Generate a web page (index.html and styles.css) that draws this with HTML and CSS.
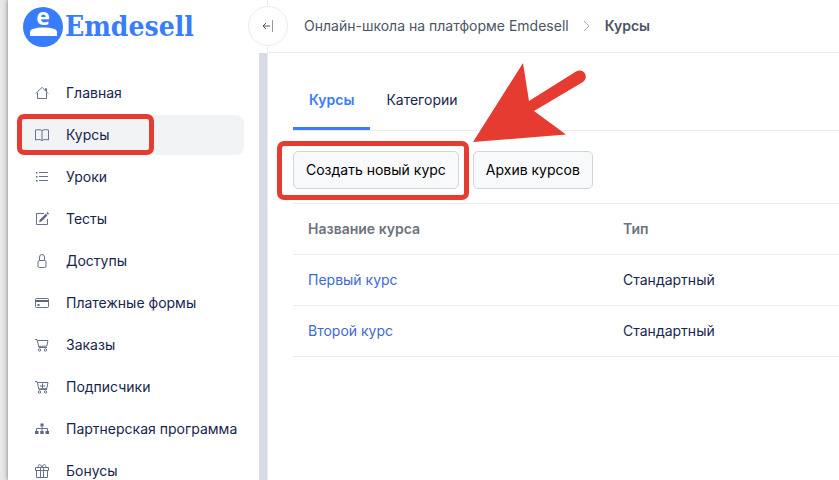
FILE: index.html
```html
<!DOCTYPE html>
<html lang="ru">
<head>
<meta charset="utf-8">
<title>Курсы</title>
<link rel="stylesheet" href="styles.css">
</head>
<body>
<div class="app">
  <aside class="sidebar">
    <a class="brand" href="#">
      <svg class="brand-mark" viewBox="0 0 40 40" aria-hidden="true">
        <circle cx="20" cy="20" r="20"/>
        <path class="light" d="M7 29v-4c0-3 5-4.500 13.500-4.500S34 22 34 25v4z"/>
        <text x="20" y="18" text-anchor="middle">e</text>
      </svg>
      <span>Emdesell</span>
    </a>
    <button class="collapse" type="button" aria-label="Свернуть меню">
      <svg viewBox="0 0 12 14"><path d="M8 7H1M4 4L1 7l3 3"/><path class="bar" d="M10.500 1v12"/></svg>
    </button>
    <div class="side-body">
      <nav class="menu">
        <a href="#"><svg viewBox="0 0 14 14"><path d="M.8 7.500L7 1.300l6.200 6.200M2.500 6.500v6h9v-6M10.500 4.500v-2h1v3"/></svg>Главная</a>
        <a class="active" href="#"><svg viewBox="0 0 14 14"><path d="M7 2.500C5.500 1.500 2.500 1.500.5 2v10c2-.7 5-.7 6.500.5 1.500-1.200 4.500-1.200 6.500-.5V2c-2-.5-5-.5-6.500.5zM7 2.500v10"/></svg>Курсы<span class="mark mark-menu"></span></a>
        <a href="#"><svg viewBox="0 0 14 14"><path d="M4 2.500h9M4 6.500h9M4 10.500h9"/><path class="fill" d="M1 2h1.500v1.500H1zM1 6h1.500v1.500H1zM1 10h1.500v1.500H1z"/></svg>Уроки</a>
        <a href="#"><svg viewBox="0 0 14 14"><path d="M9 1.500H1.500v11h11V7"/><path class="fill" d="M10.800 1.800l1.600 1.600-6 6-2.400.8.800-2.400zM11.400 1.200L12.600 0 14 1.500l-1.100 1.300z"/></svg>Тесты</a>
        <a href="#"><svg viewBox="0 0 14 14"><rect x="3" y="6.500" width="8" height="7" rx="1.500"/><path d="M4.500 6.500V3a2.500 2.500 0 0 1 5 0v3.500"/></svg>Доступы</a>
        <a href="#"><svg viewBox="0 0 14 14"><rect x=".5" y="2.500" width="13" height="9" rx="1"/><path class="fill" d="M1 4h12v2H1zM2.500 8h2v2h-2z"/></svg>Платежные формы</a>
        <a href="#"><svg viewBox="0 0 14 14"><path d="M0 1.500h2L4 9.500h8M2.500 2.500h10.500l-1.200 5.500-8 .5"/><circle cx="4.500" cy="12" r="1.200"/><circle cx="10.500" cy="12" r="1.200"/></svg>Заказы</a>
        <a href="#"><svg viewBox="0 0 14 14"><path d="M0 1.500h2L4 9.500h8M2.500 2.500h10.500l-1.200 6-8 .5M7.500 3.500v5M5 6h5"/><circle cx="4.500" cy="12" r="1.200"/><circle cx="10.500" cy="12" r="1.200"/></svg>Подписчики</a>
        <a href="#"><svg viewBox="0 0 14 14"><path class="fill" d="M5.500 1.500h3v3h-3zM0 9h3.500v3H0zM5.300 9h3.400v3H5.300zM10.500 9H14v3h-3.500z"/><path d="M7 4.500V9M1.500 9V6.500h11V9"/></svg>Партнерская программа</a>
        <a href="#"><svg viewBox="0 0 14 14"><path d="M.5 3.500h13v3H.5zM1.500 6.500v7h11v-7M5.500 3.500v10M8.500 3.500v10M7 3.500C6-.5 2.500-.5 3.500 3.500M7 3.500c1-4 4.500-4 3.500 0"/></svg>Бонусы</a>
      </nav>
    </div>
  </aside>
  <main class="main">
    <nav class="crumbs" aria-label="Путь">
      <a href="#">Онлайн-школа на платформе Emdesell</a>
      <svg viewBox="0 0 8 12" aria-hidden="true"><path d="M1 1l5 5-5 5"/></svg>
      <strong>Курсы</strong>
    </nav>
    <section class="content">
      <div class="tabs">
        <a class="current" href="#">Курсы</a>
        <a href="#">Категории</a>
      </div>
      <div class="actions">
        <div class="marked">
          <button type="button">Создать новый курс</button>
          <span class="mark mark-button"></span>
          <svg class="arrow" viewBox="0 0 114 80" aria-hidden="true"><path d="M0 79L50 0l6 38 47-29.500a6 6 0 0 1 7 10.500L61 48l32 23.500z"/></svg>
        </div>
        <button type="button">Архив курсов</button>
      </div>
      <table>
        <thead><tr><th scope="col">Название курса</th><th scope="col">Тип</th></tr></thead>
        <tbody>
          <tr><td><a href="#">Первый курс</a></td><td>Стандартный</td></tr>
          <tr><td><a href="#">Второй курс</a></td><td>Стандартный</td></tr>
        </tbody>
      </table>
    </section>
  </main>
</div>
</body>
</html>
```
FILE: styles.css
```css
* { box-sizing: border-box; }
body {
  margin: 0;
  background: #e8e8e8;
  color: #16264c;
  font: 14px/20px Inter, "Noto Sans", sans-serif;
}
a { color: inherit; text-decoration: none; }
svg { fill: none; flex: none; overflow: visible; }
.app {
  display: flex;
  height: 100vh;
  overflow: hidden;
  margin-left: 8px;
  background: #fff;
  box-shadow: 0 0 5px rgba(0, 0, 0, .5);
}
.sidebar {
  position: relative;
  display: flex;
  flex-direction: column;
  flex: none;
  width: 260px;
  border-right: 1px solid #ebecf3;
}
.brand {
  display: flex;
  align-items: center;
  gap: 2px;
  flex: none;
  height: 53px;
  padding-left: 15px;
  color: #387dff;
  font: bold 28px/40px "DejaVu Serif Condensed", "DejaVu Serif", serif;
}
.brand-mark { width: 40px; height: 40px; fill: #387dff; }
.brand-mark .light { fill: #fff; }
.brand-mark text { fill: #fff; font: bold 23px "Open Sans", sans-serif; }
.collapse {
  position: absolute;
  top: 6px;
  right: -21px;
  z-index: 1;
  display: grid;
  place-items: center;
  width: 40px;
  height: 40px;
  padding: 0;
  border: 1px solid #ebecf3;
  border-radius: 50%;
  background: #fff;
}
.collapse svg { width: 12px; height: 14px; stroke: #555; }
.collapse .bar { stroke: #999; }
.side-body {
  flex: 1;
  min-height: 0;
  overflow: hidden;
  padding: 20px 15px 0 12px;
  border-right: 8px solid #d6dbe5;
}
.menu { display: flex; flex-direction: column; gap: 2px; }
.menu a {
  position: relative;
  display: flex;
  align-items: center;
  gap: 17px;
  flex: none;
  height: 40px;
  padding-left: 15px;
  border-radius: 8px;
  white-space: nowrap;
}
.menu .active { background: #f2f3f5; }
.menu svg { width: 14px; height: 14px; stroke: #66718c; }
.menu .fill { fill: #5b6684; stroke: none; }
.mark {
  position: absolute;
  border: 5px solid #e53b30;
  border-radius: 7px;
  pointer-events: none;
}
.mark-menu { top: -1px; left: -3px; width: 137px; height: 41px; }
.mark-button { inset: -10px -10px -11px -16px; }
.main { flex: 1; min-width: 0; }
.crumbs {
  display: flex;
  align-items: center;
  gap: 14px;
  height: 53px;
  padding-left: 36px;
  border-bottom: 1px solid #ebecf3;
  color: #4b5565;
}
.crumbs svg { width: 8px; height: 12px; stroke: #a4a9b2; }
.crumbs strong { font-weight: 600; }
.content { padding: 17px 0 0 25px; }
.tabs { display: flex; height: 61px; border-bottom: 1px solid #ebecf3; }
.tabs a { padding: 20px 16px 17px; border-bottom: 3px solid transparent; }
.tabs .current { border-color: #387dff; color: #387dff; font-weight: 600; }
.actions { display: flex; gap: 14px; padding: 20px 0 14px; }
.marked { position: relative; display: flex; }
.actions button {
  height: 38px;
  padding: 0 12px;
  border: 1px solid #d2d5d9;
  border-radius: 5px;
  background: #f8f9fb;
  color: #000;
  font: inherit;
  white-space: nowrap;
}
.arrow {
  position: absolute;
  top: -88px;
  left: 180px;
  z-index: 1;
  width: 114px;
  height: 80px;
  fill: #e53b30;
}
table { width: 100%; border-collapse: separate; border-spacing: 0; border-top: 1px solid #ebebed; table-layout: fixed; }
th, td { height: 51px; padding: 0 15px; border-bottom: 1px solid #ebebed; text-align: left; }
th { color: #6d737d; font-weight: 600; }
th:first-child { width: 315px; }
td a { color: #3e68d4; }
```
